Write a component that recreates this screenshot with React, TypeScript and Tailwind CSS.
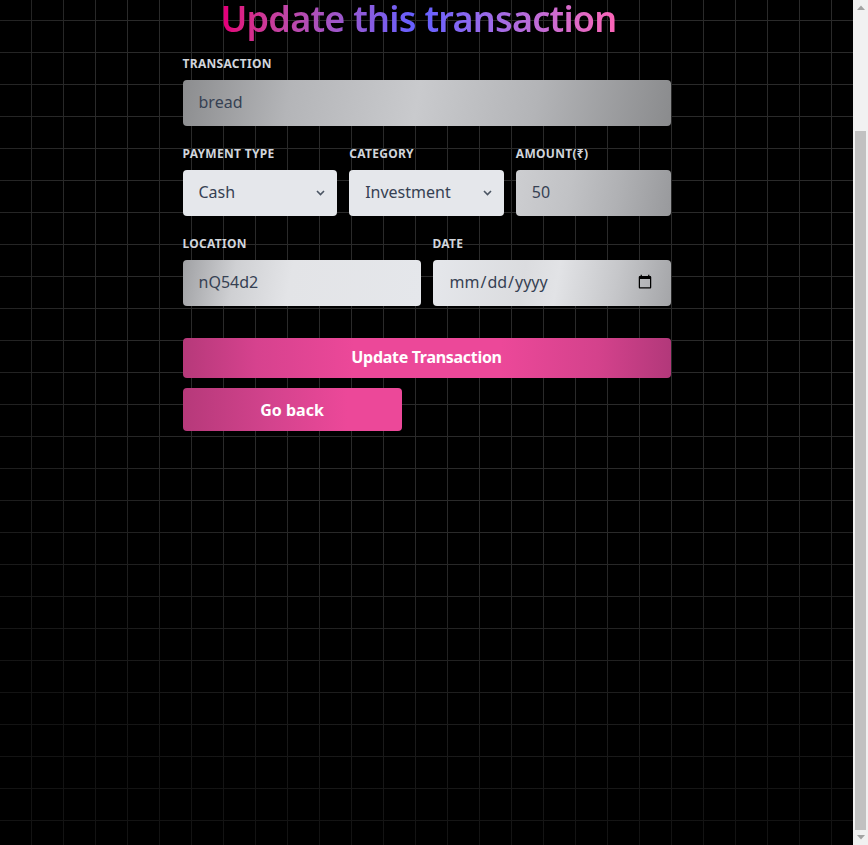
const font = { fontFamily: '"Noto Sans", "Open Sans", sans-serif' };

function Label({ children }: { children: React.ReactNode }) {
    return (
        <label className="block uppercase tracking-wide text-gray-300 text-xs font-bold mb-2 leading-4">
            {children}
        </label>
    );
}

function Chevron() {
    return (
        <svg
            className="pointer-events-none absolute right-3 top-1/2 -translate-y-1/2"
            width="9"
            height="6"
            viewBox="0 0 9 6"
            fill="none"
        >
            <path d="M1 1l3.5 3.5L8 1" stroke="#4b5563" strokeWidth="1.6" />
        </svg>
    );
}

// classic browser scrollbar, scrolled to the bottom
function Scrollbar() {
    return (
        <div className="w-[15px] h-full flex flex-col bg-[#f1f1f1]">
            <div className="h-[15px] flex items-center justify-center">
                <svg width="8" height="5" viewBox="0 0 8 5">
                    <path d="M0 5L4 0.5L8 5Z" fill="#a3a3a3" />
                </svg>
            </div>
            <div className="h-[116px]"></div>
            <div className="flex-1 mx-[2px] bg-[#c1c1c1]"></div>
            <div className="h-[15px] flex items-center justify-center">
                <svg width="8" height="5" viewBox="0 0 8 5">
                    <path d="M0 0L4 4.5L8 0Z" fill="#a3a3a3" />
                </svg>
            </div>
        </div>
    );
}

export default function App() {
    return (
        <div style={font} className="flex w-full h-[845px] overflow-hidden">
            <div className="relative flex-1 h-full bg-black bg-[linear-gradient(to_right,#2a2a2a_1px,transparent_1px),linear-gradient(to_bottom,#2a2a2a_1px,transparent_1px)] bg-[size:32px_32px] bg-[position:31px_20px]">
                {/* fade the grid toward the bottom */}
                <div className="pointer-events-none absolute inset-0 bg-[radial-gradient(ellipse_90%_80%_at_60%_20%,transparent_55%,rgba(0,0,0,0.55)_100%)]"></div>

                <div className="relative">
                    <h1 className="text-[36px] leading-[36px] pt-[1px] font-semibold text-center pr-4 tracking-[-0.75px]">
                        <span className="bg-gradient-to-r from-pink-600 via-indigo-500 to-pink-400 bg-clip-text text-transparent">
                            Update this transaction
                        </span>
                    </h1>

                    <form className="max-w-[488px] mx-auto mt-[19px] flex flex-col gap-5">
                        <div>
                            <Label>Transaction</Label>
                            <input
                                defaultValue="bread"
                                className="w-full h-[46px] rounded px-4 pb-0.5 text-gray-700 text-base outline-none bg-[linear-gradient(100deg,#8c8d8f_0%,#b4b5b8_22%,#c9cacd_48%,#b3b4b7_72%,#8a8b8d_100%)]"
                            />
                        </div>

                        <div className="grid grid-cols-3 gap-3">
                            <div>
                                <Label>Payment Type</Label>
                                <div className="relative">
                                    <select className="w-full h-[46px] rounded px-4 pb-0.5 text-gray-700 text-base outline-none appearance-none bg-gray-200">
                                        <option>Cash</option>
                                        <option>Card</option>
                                    </select>
                                    <Chevron />
                                </div>
                            </div>
                            <div>
                                <Label>Category</Label>
                                <div className="relative">
                                    <select className="w-full h-[46px] rounded px-4 pb-0.5 text-gray-700 text-base outline-none appearance-none bg-gray-200">
                                        <option>Investment</option>
                                        <option>Saving</option>
                                    </select>
                                    <Chevron />
                                </div>
                            </div>
                            <div>
                                <Label>Amount(₹)</Label>
                                <input
                                    defaultValue="50"
                                    className="w-full h-[46px] rounded px-4 pb-0.5 text-gray-700 text-base outline-none bg-[linear-gradient(100deg,#cdced1_0%,#c1c2c5_35%,#b0b1b4_65%,#98999c_100%)]"
                                />
                            </div>
                        </div>

                        <div className="grid grid-cols-2 gap-3">
                            <div>
                                <Label>Location</Label>
                                <input
                                    defaultValue="nQ54d2"
                                    className="w-full h-[46px] rounded px-4 pb-0.5 text-gray-700 text-base outline-none bg-[linear-gradient(100deg,#a0a1a4_0%,#cfd0d3_22%,#e3e4e7_45%,#e5e7eb_100%)]"
                                />
                            </div>
                            <div>
                                <Label>Date</Label>
                                <input
                                    type="date"
                                    className="w-full h-[46px] rounded px-4 pb-0.5 text-gray-700 text-base outline-none bg-[linear-gradient(100deg,#e5e7eb_0%,#dbdcdf_38%,#e2e3e6_52%,#c6c7ca_76%,#a4a5a8_100%)]"
                                />
                            </div>
                        </div>

                        <div className="flex flex-col gap-[10px] mt-3">
                            <button
                                type="button"
                                className="w-full h-10 rounded pb-0.5 text-white font-bold text-base tracking-[-0.3px] bg-[linear-gradient(90deg,#b6397a_0%,#d6428e_15%,#ec4899_35%,#ec4899_65%,#d4428c_85%,#b2387a_100%)]"
                            >
                                Update Transaction
                            </button>
                            <button
                                type="button"
                                className="w-[219px] h-[43px] rounded text-white font-bold text-base bg-[linear-gradient(90deg,#b6397a_0%,#d3438d_40%,#ec4899_75%,#ec4899_100%)]"
                            >
                                Go back
                            </button>
                        </div>
                    </form>
                </div>
            </div>
            <Scrollbar />
        </div>
    );
}
